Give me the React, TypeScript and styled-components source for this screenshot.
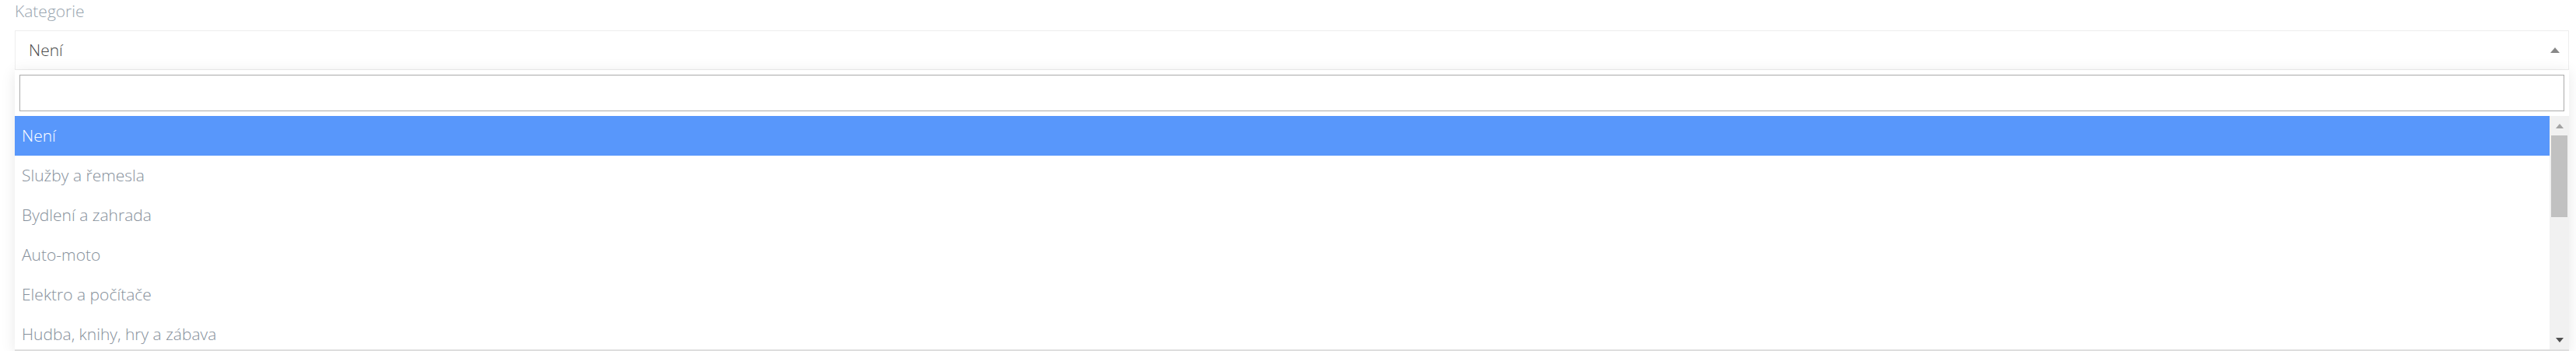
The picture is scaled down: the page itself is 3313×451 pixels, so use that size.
import styled, { createGlobalStyle } from "styled-components";

const options = [
    "Není",
    "Služby a řemesla",
    "Bydlení a zahrada",
    "Auto-moto",
    "Elektro a počítače",
    "Hudba, knihy, hry a zábava",
];

export default function App() {
    return (
        <>
            <GlobalStyle />
            <Page>
                <Label>Kategorie</Label>
                <SelectBox>
                    <SelectValue>Není</SelectValue>
                    <Arrow $dir="up" $color="#888" $w={6} $h={7} />
                </SelectBox>
                <Dropdown>
                    <SearchWrap>
                        <SearchInput type="text" />
                    </SearchWrap>
                    <Results>
                        <OptionList>
                            {options.map((o, i) => (
                                <Option key={o} $active={i === 0}>{o}</Option>
                            ))}
                        </OptionList>
                        <ScrollTrack>
                            <ScrollButton>
                                <Arrow $dir="up" $color="#a3a3a3" $w={5.5} $h={6} />
                            </ScrollButton>
                            <Thumb />
                            <TrackFill />
                            <ScrollButton>
                                <Arrow $dir="down" $color="#505050" $w={5.5} $h={6} />
                            </ScrollButton>
                        </ScrollTrack>
                    </Results>
                </Dropdown>
            </Page>
        </>
    );
}

const GlobalStyle = createGlobalStyle`
    html, body {
        margin: 0;
        padding: 0;
        background: #fff;
        overflow: hidden;
    }
    body {
        font-family: "Open Sans", "Liberation Sans", sans-serif;
    }
    * {
        box-sizing: border-box;
    }
`;

const Page = styled.div`
    padding: 0 9px 0 19px;
`;

const Label = styled.div`
    font-size: 21px;
    font-weight: 300;
    line-height: 28px;
    color: #98a4ae;
    margin-bottom: 11px;
`;

const SelectBox = styled.div`
    height: 51px;
    border: 1px solid #eeeeee;
    display: flex;
    align-items: center;
    justify-content: space-between;
    padding: 0 11px 0 17px;
    background: #fff;
`;

const SelectValue = styled.span`
    font-size: 21px;
    font-weight: 300;
    line-height: 49px;
    color: #4a4a4a;
`;

const Arrow = styled.span<{ $dir: "up" | "down"; $color: string; $w: number; $h: number }>`
    display: block;
    width: 0;
    height: 0;
    border-left: ${({ $w }) => $w}px solid transparent;
    border-right: ${({ $w }) => $w}px solid transparent;
    ${({ $dir, $color, $h }) =>
        $dir === "up"
            ? `border-bottom: ${$h}px solid ${$color};`
            : `border-top: ${$h}px solid ${$color};`}
`;

const Dropdown = styled.div`
    background: #fff;
    box-shadow: 0 2px 18px rgba(0, 0, 0, 0.09);
    border-bottom: 3px solid #dedede;
`;

const SearchWrap = styled.div`
    padding: 6px;
`;

const SearchInput = styled.input`
    display: block;
    width: 100%;
    height: 47px;
    border: 1px solid #aaaaaa;
    outline: none;
    padding: 6px;
    font-family: inherit;
    font-size: 21px;
`;

const Results = styled.div`
    display: flex;
    height: 300px;
`;

const OptionList = styled.ul`
    flex: 1;
    list-style: none;
    margin: 0;
    padding: 0;
    overflow: hidden;
`;

const Option = styled.li<{ $active?: boolean }>`
    height: 51px;
    padding: 9px;
    font-size: 21px;
    font-weight: 300;
    line-height: 33px;
    white-space: nowrap;
    color: ${({ $active }) => ($active ? "#fff" : "#86909b")};
    background: ${({ $active }) => ($active ? "#5897fb" : "transparent")};
`;

const ScrollTrack = styled.div`
    width: 25px;
    background: #f1f1f1;
    display: flex;
    flex-direction: column;
    align-items: center;
`;

const ScrollButton = styled.div`
    height: 25px;
    width: 100%;
    display: flex;
    align-items: center;
    justify-content: center;
`;

const Thumb = styled.div`
    width: 21px;
    height: 105px;
    background: #c1c1c1;
`;

const TrackFill = styled.div`
    flex: 1;
`;
